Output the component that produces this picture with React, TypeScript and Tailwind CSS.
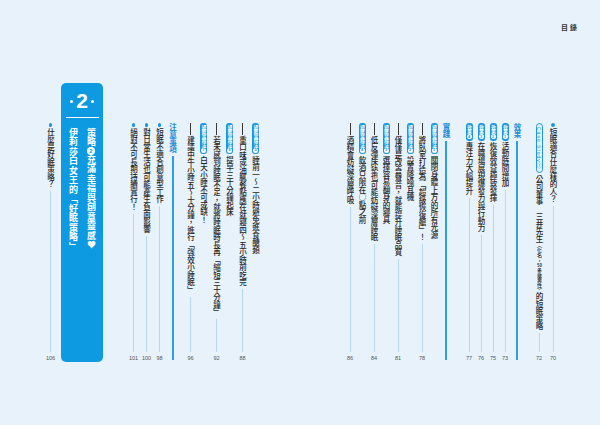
import React from "react";

type Item =
  | { kind: "bullet"; text: string; num: string; ml?: string }
  | { kind: "badge"; tag: string; no: string; text: string; num?: string; ml?: string }
  | { kind: "dash"; text: string; num: string; ml?: string }
  | { kind: "head"; text: string; ml?: string }
  | { kind: "case"; num: string; ml?: string }
  | { kind: "box"; ml?: string };

const RIGHT: Item[] = [
  { kind: "bullet", text: "短眠適合什麼樣的人？", num: "70", ml: "ml-[2px]" },
  { kind: "case", num: "72", ml: "ml-[10px]" },
  { kind: "head", text: "效果" },
  { kind: "badge", tag: "效果", no: "1", text: "活動時間增加", num: "73" },
  { kind: "badge", tag: "效果", no: "2", text: "恢復效益極致發揮", num: "75" },
  { kind: "badge", tag: "效果", no: "3", text: "在職場展現爆發力與行動力", num: "76" },
  { kind: "badge", tag: "效果", no: "4", text: "專注力大幅提升", num: "77", ml: "ml-[11px]" },
  { kind: "head", text: "實踐" },
  { kind: "badge", tag: "短眠實踐法", no: "1", text: "關閉身體上方的所有光源" },
  { kind: "dash", text: "將臥室打造為「超級恢復艙」！", num: "78" },
  { kind: "badge", tag: "短眠實踐法", no: "2", text: "設置降噪耳機" },
  { kind: "dash", text: "僅僅是改善聲音，就能提升睡眠品質", num: "81" },
  { kind: "badge", tag: "短眠實踐法", no: "3", text: "選擇容易翻身的寢具" },
  { kind: "dash", text: "低反彈床墊也可能妨礙深層睡眠", num: "84" },
  { kind: "badge", tag: "短眠實踐法", no: "4", text: "飲酒只限在○點之前" },
  { kind: "dash", text: "酒精會妨礙深層呼吸", num: "86" },
];

const LEFT: Item[] = [
  { kind: "badge", tag: "短眠實踐法", no: "5", text: "睡前一～二小時避免進食醣類" },
  { kind: "dash", text: "重口味或油膩餐點應在就寢四～五小時前吃完", num: "88" },
  { kind: "badge", tag: "短眠實踐法", no: "6", text: "提早三十分鐘起床" },
  { kind: "dash", text: "若未感到睡眠不足，就將睡眠時長再「縮短三十分鐘」", num: "92" },
  { kind: "badge", tag: "短眠實踐法", no: "7", text: "白天小睡不可或缺！" },
  { kind: "dash", text: "建議中午小睡五～十分鐘，進行「強效小睡眠」", num: "96", ml: "ml-[5px]" },
  { kind: "head", text: "注意事項" },
  { kind: "bullet", text: "短眠不適合創意型工作", num: "98" },
  { kind: "bullet", text: "對日常生活也可能產生負面影響", num: "100" },
  { kind: "bullet", text: "絕對不可長期持續實行！", num: "101", ml: "ml-[24px]" },
  { kind: "box", ml: "ml-[4px]" },
  { kind: "bullet", text: "什麼是好眠策略？", num: "106" },
];

// vertical, upright CJK
const vert = "[writing-mode:vertical-rl] [text-orientation:upright]";
const vtext = `${vert} text-[7.5px] font-medium leading-[10px] text-[#262626]`;

function Badge({ tag, no }: { tag: string; no: string }) {
  return (
    <div className="mb-[1.5px] flex w-[7px] flex-col items-center rounded-[3px] bg-[#1d95df] py-[1.5px]">
      <span className={`${vert} text-[4.5px] font-bold leading-[7px] text-white`}>{tag}</span>
      <span className="mt-[0.5px] flex h-[5px] w-[5px] items-center justify-center rounded-full bg-white font-['Liberation_Sans'] text-[4px] font-bold leading-none text-[#1d95df]">
        {no}
      </span>
    </div>
  );
}

function Tail({ num }: { num?: string }) {
  if (!num) return null;
  return (
    <>
      <div className="mb-[3px] mt-[3px] w-px flex-1 bg-[#b3d8f0]" />
      <span className="h-[7px] whitespace-nowrap font-['Liberation_Sans'] text-[5.5px] leading-[7px] text-[#555]">
        {num}
      </span>
    </>
  );
}

function ChapterBox() {
  return (
    <div className="flex h-full w-[42px] shrink-0 flex-col items-center rounded-[5px] bg-[#0e9ae0] pt-[7px]">
      <div className="flex items-center gap-[3px]">
        <span className="h-[3px] w-[3px] rounded-full bg-white" />
        <span className="font-['Liberation_Sans'] text-[21px] font-bold leading-[22px] text-white">2</span>
        <span className="h-[3px] w-[3px] rounded-full bg-white" />
      </div>
      <div className="mt-[5px] h-px w-[33px] bg-white" />
      <div className="mt-[10px] flex flex-row-reverse gap-[8px]">
        <div className={`${vert} text-[9px] font-bold leading-[10px] tracking-[0.5px] text-white`}>
          策略
          <span className="inline-flex h-[8px] w-[8px] items-center justify-center rounded-full bg-white font-['Liberation_Sans'] text-[6px] leading-none text-[#0e9ae0]">
            2
          </span>
          　充滿幸福與創意靈感♥
        </div>
        <div className={`${vert} text-[9px] font-bold leading-[10px] tracking-[0.5px] text-white`}>
          伊莉莎白女王的「好眠策略」
        </div>
      </div>
    </div>
  );
}

function Column({ item, w }: { item: Item; w: string }) {
  if (item.kind === "box") {
    return (
      <div className={`h-full shrink-0 ${item.ml ?? ""}`}>
        <ChapterBox />
      </div>
    );
  }

  return (
    <div className={`flex h-full shrink-0 flex-col items-center pt-[40px] ${w} ${item.ml ?? ""}`}>
      {item.kind === "bullet" && (
        <>
          <span className="mb-[1.5px] h-[3.5px] w-[3.5px] shrink-0 rounded-full bg-[#1d95df]" />
          <div className={vtext}>{item.text}</div>
          <Tail num={item.num} />
        </>
      )}
      {item.kind === "badge" && (
        <>
          <Badge tag={item.tag} no={item.no} />
          <div className={vtext}>{item.text}</div>
          <Tail num={item.num} />
        </>
      )}
      {item.kind === "dash" && (
        <>
          <div className="mb-[1px] h-[12px] w-px shrink-0 bg-[#383838]" />
          <div className={vtext}>{item.text}</div>
          <Tail num={item.num} />
        </>
      )}
      {item.kind === "head" && (
        <>
          <div className={`${vert} text-[7.5px] font-bold leading-[10px] text-[#1a8ed8]`}>{item.text}</div>
          <div className="mb-[2px] mt-[3px] w-[2px] flex-1 bg-[#2b9de2]" />
        </>
      )}
      {item.kind === "case" && (
        <>
          <div className="mb-[2px] flex w-[7px] items-center justify-center rounded-full border-[0.7px] border-[#1d95df] py-[3px]">
            <span className="[writing-mode:vertical-rl] [text-orientation:mixed] font-['Liberation_Sans','Noto_Sans_CJK_TC',sans-serif] text-[5px] leading-[6px] tracking-[1px] text-[#1d95df]">
              Case Study①
            </span>
          </div>
          <div className={vtext}>
            公司董事　三井先生
            <span className="text-[5px]">
              （化名，<span className="[text-combine-upright:all]">50</span>多歲男性）
            </span>
            的短眠策略
          </div>
          <Tail num={item.num} />
        </>
      )}
    </div>
  );
}

export default function App() {
  return (
    <div className="h-[425px] w-[600px] overflow-hidden bg-[#e7f2fb] font-['Noto_Sans_CJK_TC','Noto_Sans',sans-serif]">
      <div className="flex h-[83px] items-start justify-end pr-[21px] pt-[22px]">
        <span className="text-[7px] font-bold leading-[10px] tracking-[2px] text-[#333]">目錄</span>
      </div>
      <div className="flex h-[279px]">
        {/* left page */}
        <div className="flex w-[300px] flex-row-reverse pr-[38px]">
          {LEFT.map((it, i) => (
            <Column key={i} item={it} w="w-[13px]" />
          ))}
        </div>
        {/* right page */}
        <div className="flex w-[300px] flex-row-reverse pr-[41px]">
          {RIGHT.map((it, i) => (
            <Column key={i} item={it} w="w-3" />
          ))}
        </div>
      </div>
    </div>
  );
}
